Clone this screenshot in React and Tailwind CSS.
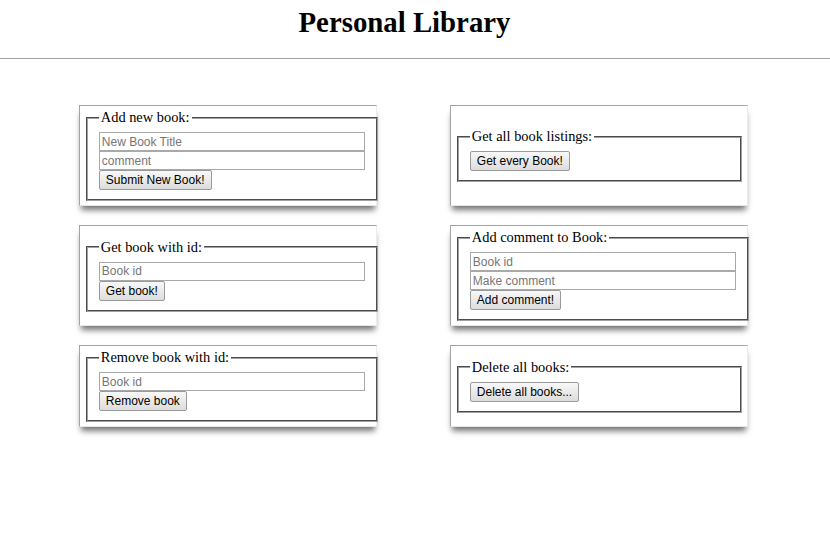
const serif = "font-['Liberation_Serif','Times_New_Roman',serif]";
const sans = "font-['Liberation_Sans',Arial,sans-serif]";

const inputClass =
  "block w-[266px] h-[19px] border border-[#a9a9a9] bg-white px-[2px] text-[12px] text-black outline-none placeholder:text-[#767676] " +
  sans;

const buttonClass =
  "block h-[20px] px-[6px] rounded-[2px] border border-[#9a9a9a] bg-linear-to-b from-[#f8f8f8] to-[#dcdcdc] text-[12px] leading-[16px] text-black " +
  sans;

const Card = ({ title, side, children }) => {
  return (
    <div className="flex flex-col justify-center border border-t-[#a3a3a3] border-l-[#a3a3a3] border-r-[#ececec] border-b-[#e6e6e6] bg-white pt-[3px] pb-[4px] shadow-[0_6px_6px_-2px_rgba(0,0,0,0.55)]">
      <fieldset
        className={
          "ml-[6px] border-2 border-[#a0a0a0] [border-style:groove] px-[10.8px] pt-[6px] pb-[9px] " +
          (side === "right" ? "mr-[5px]" : "mr-0")
        }
      >
        <legend className={"px-[2px] text-[14.4px] leading-[17px] text-black " + serif}>
          {title}
        </legend>
        {children}
      </fieldset>
    </div>
  );
};

const App = () => {
  return (
    <div className="min-h-[538px] w-[830px] bg-white">
      {/* header */}
      <header className="h-[59px] border-b border-[#a0a0a0] pt-[6px]">
        <h1 className={"text-center text-[28.8px] font-bold leading-[33px] text-black pr-[21px] " + serif}>
          Personal Library
        </h1>
      </header>

      {/* forms */}
      <main className="grid grid-cols-[298px_298px] gap-x-[73px] gap-y-[19px] pl-[79px] pt-[46px]">
        <Card title="Add new book:">
          <input className={inputClass} placeholder="New Book Title" />
          <input className={inputClass} placeholder="comment" />
          <button className={buttonClass}>Submit New Book!</button>
        </Card>

        <Card title="Get all book listings:" side="right">
          <button className={buttonClass}>Get every Book!</button>
        </Card>

        <Card title="Get book with id:">
          <input className={inputClass} placeholder="Book id" />
          <button className={buttonClass}>Get book!</button>
        </Card>

        <Card title="Add comment to Book:" side="right">
          <input className={inputClass} placeholder="Book id" />
          <input className={inputClass} placeholder="Make comment" />
          <button className={buttonClass}>Add comment!</button>
        </Card>

        <Card title="Remove book with id:">
          <input className={inputClass} placeholder="Book id" />
          <button className={buttonClass}>Remove book</button>
        </Card>

        <Card title="Delete all books:" side="right">
          <button className={buttonClass}>Delete all books...</button>
        </Card>
      </main>
    </div>
  );
};

export default App;
